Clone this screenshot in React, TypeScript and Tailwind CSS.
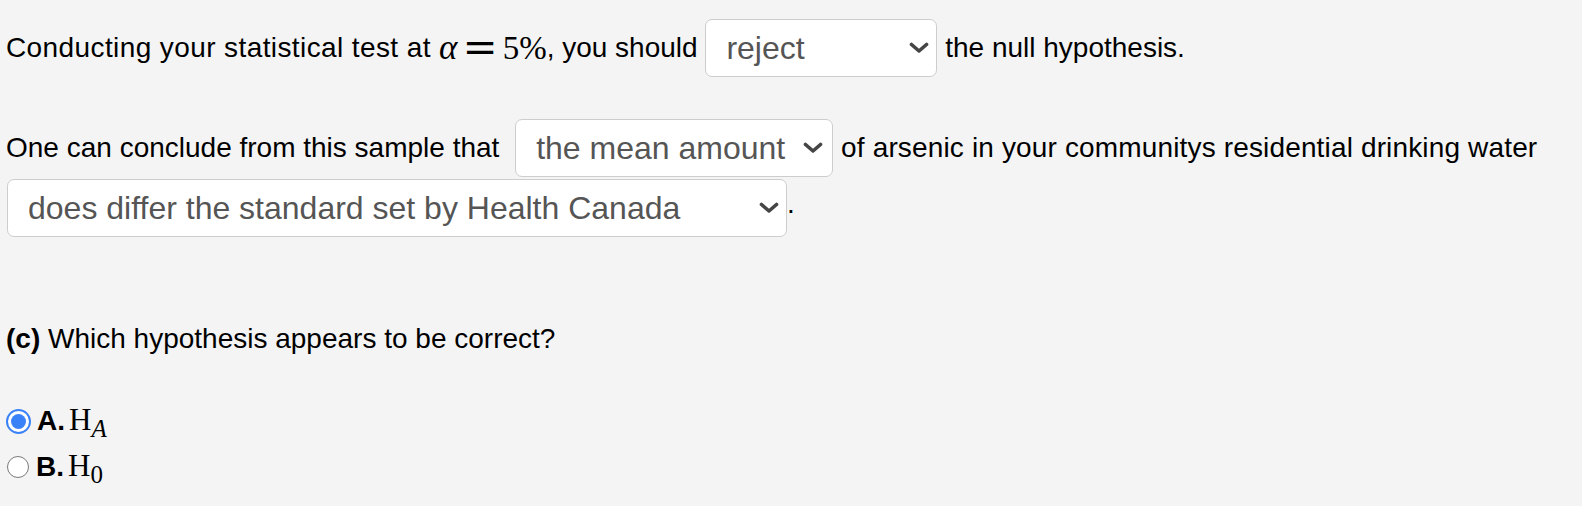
import React from "react";

function Chevron() {
  return (
    <svg width="20" height="12" viewBox="0 0 20 12" className="shrink-0">
      <path d="M2.5 2.5 L10 9 L17.5 2.5" fill="none" stroke="#454545" strokeWidth="3.6" strokeLinecap="round" strokeLinejoin="round" />
    </svg>
  );
}

function FakeSelect({ value, className }: { value: string; className: string }) {
  return (
    <div
      className={`flex h-[58px] items-center justify-between rounded-[7px] border border-[#cdcdcd] bg-white pl-[20px] pr-[7px] text-[32px] text-[#555] ${className}`}
    >
      <span className="whitespace-nowrap">{value}</span>
      <Chevron />
    </div>
  );
}

function Radio({ checked }: { checked: boolean }) {
  if (checked) {
    return (
      <span className="flex h-[25px] w-[25px] items-center justify-center rounded-full border-[2.5px] border-[#3a82f7] bg-white">
        <span className="h-[15px] w-[15px] rounded-full bg-[#3a82f7]" />
      </span>
    );
  }
  return (
    <span className="ml-[1px] mr-[1px] h-[22px] w-[22px] rounded-full border-[1.5px] border-[#7a7a7a] bg-white" />
  );
}

export default function App() {
  return (
    <div className="min-h-[506px] bg-[#f4f4f4] pl-[6px] pt-[19px] text-[28px] leading-[32px] text-black [font-family:'Liberation_Sans',Arial,sans-serif]">
      <div className="flex items-center whitespace-nowrap">
        <span className="tracking-[0.4px]">Conducting your statistical test at&nbsp;</span>
        <span className="italic [font-family:'Liberation_Serif',serif] text-[35px]">α</span>
        <span className="ml-[5px] mr-[5px] text-[42px] [font-family:'DejaVu_Serif',serif]">=</span>
        <span className="text-[33px] [font-family:'Liberation_Serif',serif]">5%</span>
        <span>, you should&nbsp;</span>
        <FakeSelect value="reject" className="w-[232px]" />
        <span>&nbsp;the null hypothesis.</span>
      </div>

      <div className="mt-[42px] flex items-center whitespace-nowrap">
        <span>One can conclude from this sample that&nbsp;</span>
        <FakeSelect value="the mean amount" className="ml-[8px] w-[318px] pr-[9px]" />
        <span className="tracking-[0.15px]">&nbsp;of arsenic in your communitys residential drinking water</span>
      </div>
      <div className="mt-[2px] flex items-center whitespace-nowrap">
        <FakeSelect value="does differ the standard set by Health Canada" className="ml-[1px] w-[780px]" />
        <span className="self-end pb-[17px]">.</span>
      </div>

      <div className="mt-[86px] whitespace-nowrap">
        <span className="font-bold">(c)</span> Which hypothesis appears to be correct?
      </div>

      <div className="mt-[49px] flex flex-col gap-[12px]">
        <div className="flex items-center gap-[6px]">
          <Radio checked />
          <span className="font-bold">A.</span>
          <span className="-ml-[2px] flex items-baseline text-[31px] [font-family:'Liberation_Serif',serif]">
            H<span className="inline-block translate-y-[7px] text-[25px] italic">A</span>
          </span>
        </div>
        <div className="flex items-center gap-[6px]">
          <Radio checked={false} />
          <span className="font-bold">B.</span>
          <span className="-ml-[2px] flex items-baseline text-[31px] [font-family:'Liberation_Serif',serif]">
            H<span className="inline-block translate-y-[7px] text-[25px]">0</span>
          </span>
        </div>
      </div>
    </div>
  );
}
